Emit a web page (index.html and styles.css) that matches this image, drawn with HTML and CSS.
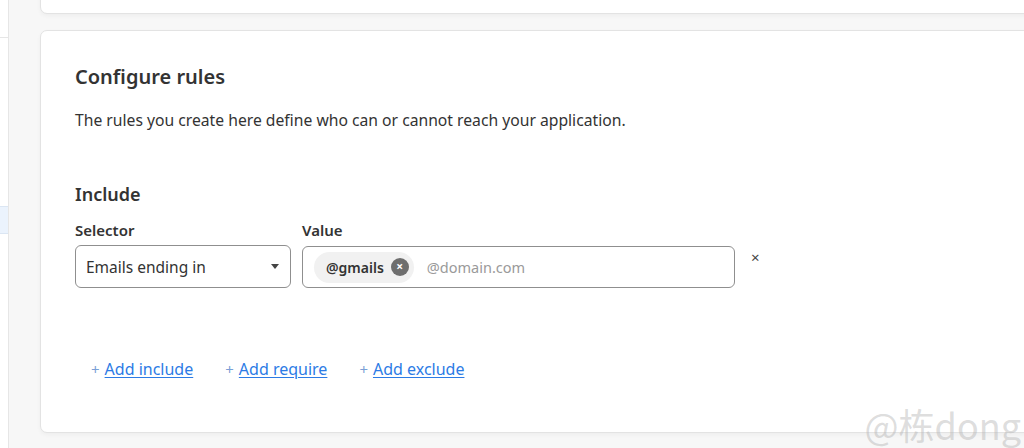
FILE: index.html
```html
<!DOCTYPE html>
<html>
<head>
<meta charset="utf-8">
<link rel="stylesheet" href="styles.css">
</head>
<body>
<div class="layout">
  <aside class="sidebar">
    <div class="side-top"></div>
    <div class="side-active"></div>
  </aside>
  <main class="main">
    <div class="card card-prev"></div>
    <section class="card card-rules">
      <h2 class="title">Configure rules</h2>
      <p class="desc">The rules you create here define who can or cannot reach your application.</p>
      <h3 class="group">Include</h3>
      <div class="row">
        <div class="field field-selector">
          <label class="label">Selector</label>
          <div class="select">
            <span>Emails ending in</span>
            <span class="caret"></span>
          </div>
        </div>
        <div class="field field-value">
          <label class="label">Value</label>
          <div class="input">
            <span class="chip">@gmails <span class="chip-x">×</span></span>
            <span class="placeholder">@domain.com</span>
          </div>
        </div>
        <span class="remove">×</span>
      </div>
      <div class="actions">
        <a class="action"><span class="plus">+</span><span class="link">Add include</span></a>
        <a class="action"><span class="plus">+</span><span class="link">Add require</span></a>
        <a class="action"><span class="plus">+</span><span class="link">Add exclude</span></a>
      </div>
    </section>
  </main>
</div>
<div class="watermark">@栋dong</div>
</body>
</html>
```
FILE: styles.css
```css
html, body {
  margin: 0;
  padding: 0;
  height: 448px;
  overflow: hidden;
  background: #f7f7f7;
  font-family: "Noto Sans", "Open Sans", sans-serif;
  color: #333;
}
.layout {
  display: flex;
  height: 448px;
  width: 1024px;
  overflow: hidden;
}
.sidebar {
  width: 8px;
  flex: none;
  background: #fff;
  border-right: 1px solid #e6e6e6;
  display: flex;
  flex-direction: column;
}
.side-top {
  height: 37px;
  border-bottom: 1px solid #e6e6e6;
}
.side-active {
  margin-top: 168px;
  height: 26px;
  background: #ebf3fd;
  border-top: 1px solid #dbe6f3;
  border-bottom: 1px solid #dbe6f3;
}
.main {
  padding-left: 31px;
  flex: 1;
  min-width: 0;
  margin-right: -12px;
  display: flex;
  flex-direction: column;
  gap: 16px;
}
.card {
  background: #fff;
  border: 1px solid #e3e3e3;
  border-radius: 7px;
  box-shadow: 0 2px 4px rgba(0,0,0,0.04);
}
.card-prev {
  height: 40px;
  margin-top: -28px;
}
.card-rules {
  height: 403px;
  box-sizing: border-box;
  padding: 0 34px;
}
.title {
  margin: 33px 0 0;
  font-size: 20px;
  font-weight: 600;
  line-height: 26px;
  color: #333;
}
.desc {
  margin: 19px 0 0;
  font-size: 15.7px;
  line-height: 22px;
  color: #333;
}
.group {
  margin: 51px 0 0;
  font-size: 18px;
  font-weight: 600;
  line-height: 24px;
}
.row {
  display: flex;
  align-items: flex-start;
  gap: 11px;
  margin-top: 12px;
}
.field {
  display: flex;
  flex-direction: column;
}
.label {
  font-size: 15px;
  font-weight: 600;
  line-height: 24px;
  margin-bottom: 3px;
}
.select {
  width: 216px;
  height: 43px;
  box-sizing: border-box;
  border: 1px solid #8f8f8f;
  border-radius: 6px;
  display: flex;
  align-items: center;
  justify-content: space-between;
  padding: 0 11px 0 10px;
  font-size: 15.5px;
}
.caret {
  width: 0;
  height: 0;
  border-left: 4.5px solid transparent;
  border-right: 4.5px solid transparent;
  border-top: 5px solid #444;
}
.input {
  width: 433px;
  height: 42px;
  margin-top: 1px;
  box-sizing: border-box;
  border: 1px solid #8f8f8f;
  border-radius: 6px;
  display: flex;
  align-items: center;
  padding: 0 11px;
  gap: 13px;
  font-size: 14px;
}
.chip {
  display: inline-flex;
  align-items: center;
  gap: 7px;
  height: 31px;
  padding: 0 5px 0 12px;
  background: #f1f1f1;
  border-radius: 16px;
  font-weight: 600;
  font-size: 14px;
  color: #333;
}
.chip-x {
  width: 18px;
  height: 18px;
  border-radius: 50%;
  background: #6e6e6e;
  color: #fff;
  font-size: 12px;
  line-height: 18px;
  text-align: center;
  font-weight: 700;
}
.placeholder {
  color: #9a9a9a;
  font-size: 14.5px;
}
.remove {
  margin-top: 29px;
  margin-left: 5px;
  font-size: 15px;
  color: #444;
}
.actions {
  display: flex;
  gap: 32px;
  margin-top: 70px;
  padding-left: 16px;
}
.action {
  display: inline-flex;
  align-items: baseline;
  gap: 5px;
  font-size: 16px;
  cursor: pointer;
}
.plus {
  color: #7a9fd6;
  font-size: 15px;
}
.link {
  color: #2c7be5;
  text-decoration: underline;
  text-underline-offset: 2px;
}
.watermark {
  position: absolute;
  right: 3px;
  bottom: 2px;
  font-family: "Noto Sans CJK SC", "Noto Sans", sans-serif;
  font-size: 36px;
  color: rgba(180,180,180,0.45);
  line-height: 44px;
}
```
